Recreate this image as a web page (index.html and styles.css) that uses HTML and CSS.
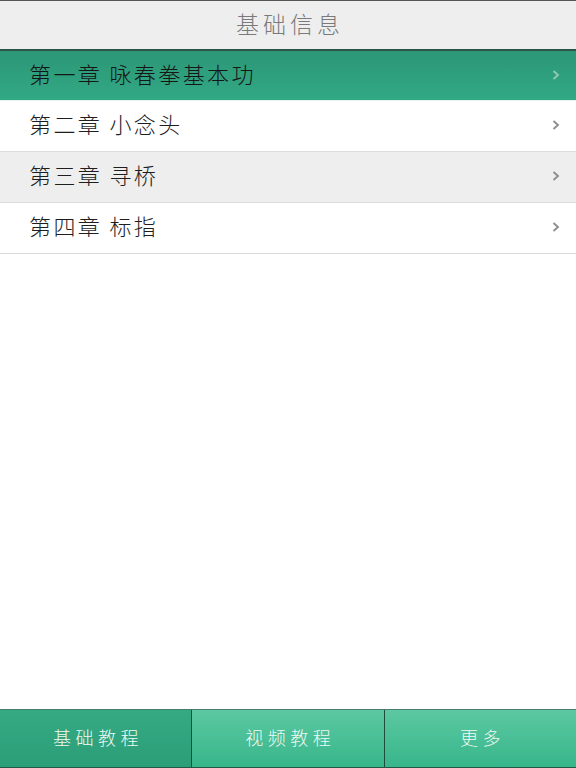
FILE: index.html
```html
<!DOCTYPE html>
<html lang="zh">
<head>
<meta charset="utf-8">
<link rel="stylesheet" href="styles.css">
</head>
<body>
<div class="app">
  <header class="header"><span class="title">基础信息</span></header>
  <ul class="list">
    <li class="row row-active"><span class="label">第一章 咏春拳基本功</span><svg class="chev" width="8" height="10" viewBox="0 0 8 10"><polyline points="1.5,1 6,5 1.5,9" fill="none" stroke="currentColor" stroke-width="1.8"/></svg></li>
    <li class="row"><span class="label">第二章 小念头</span><svg class="chev" width="8" height="10" viewBox="0 0 8 10"><polyline points="1.5,1 6,5 1.5,9" fill="none" stroke="currentColor" stroke-width="1.8"/></svg></li>
    <li class="row row-gray"><span class="label">第三章 寻桥</span><svg class="chev" width="8" height="10" viewBox="0 0 8 10"><polyline points="1.5,1 6,5 1.5,9" fill="none" stroke="currentColor" stroke-width="1.8"/></svg></li>
    <li class="row"><span class="label">第四章 标指</span><svg class="chev" width="8" height="10" viewBox="0 0 8 10"><polyline points="1.5,1 6,5 1.5,9" fill="none" stroke="currentColor" stroke-width="1.8"/></svg></li>
  </ul>
  <nav class="tabs">
    <div class="tab tab-active"><span class="tab-label">基础教程</span></div>
    <div class="tab"><span class="tab-label">视频教程</span></div>
    <div class="tab"><span class="tab-label">更多</span></div>
  </nav>
</div>
</body>
</html>
```
FILE: styles.css
```css
* { box-sizing: border-box; }
html, body { margin: 0; padding: 0; }
body {
  font-family: "Noto Sans CJK SC", "Noto Sans", sans-serif;
  background: #fff;
}
.app {
  width: 576px;
  height: 768px;
  display: flex;
  flex-direction: column;
}
.header {
  height: 51px;
  background: #eeeeee;
  border-top: 1px solid #555;
  border-bottom: 2px solid #2c5446;
  display: flex;
  align-items: center;
  justify-content: center;
  padding-bottom: 3px;
}
.title {
  font-size: 23px;
  font-weight: 300;
  color: #7a7a7a;
  letter-spacing: 4px;
  margin-right: -4px;
  line-height: 1;
}
.list {
  list-style: none;
  margin: 0;
  padding: 0;
  flex: 1;
}
.row {
  height: 51px;
  display: flex;
  align-items: center;
  justify-content: space-between;
  padding: 0 16px 6px 29px;
  border-bottom: 1px solid #dcdcdc;
  background: #fff;
}
.label {
  font-size: 22px;
  font-weight: 300;
  color: #1e1e1e;
  letter-spacing: 2.4px;
  line-height: 1;
}
.row-active {
  height: 50px;
  background: linear-gradient(#2c9776, #32a884);
  border-bottom: 1px solid #e4f3ee;
}
.row-active .label { color: #161616; }
.row-gray { background: #eeeeee; }
.chev {
  color: #8c8c8c;
  margin-top: 4px;
}
.row-active .chev { color: #8fcab5; }
.tabs {
  height: 59px;
  display: flex;
  border-top: 1px solid #4a7d6b;
  border-bottom: 1px solid #1f5a45;
}
.tab {
  flex: 1;
  display: flex;
  align-items: center;
  justify-content: center;
  background: linear-gradient(#5cc8a2, #38b68b);
  border-left: 1px solid #1e4d3d;
  padding-bottom: 3px;
}
.tab:first-child { border-left: none; }
.tab-label {
  font-size: 18px;
  font-weight: 300;
  color: #eef8f3;
  letter-spacing: 4.5px;
  margin-right: -4.5px;
  line-height: 1;
}
.tab-active {
  background: linear-gradient(#34aa83, #2c9e78);
}
```
